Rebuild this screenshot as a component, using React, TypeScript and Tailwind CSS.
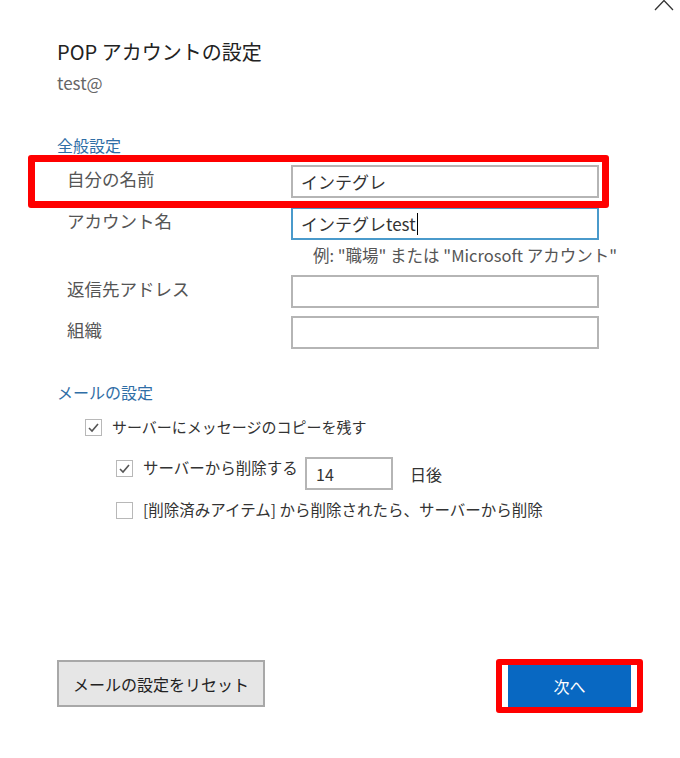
import React from "react";

const font = { fontFamily: "'Noto Sans CJK JP', 'Noto Sans', sans-serif" };

function Check({ checked }: { checked: boolean }) {
  return (
    <div className="w-[17px] h-[17px] border border-[#b8b8b8] bg-white flex items-center justify-center shrink-0">
      {checked && (
        <svg width="13" height="13" viewBox="0 0 13 13">
          <path d="M2 7 L5 10 L11 3" fill="none" stroke="#555" strokeWidth="1.6" />
        </svg>
      )}
    </div>
  );
}

function Field({ label, value, focused, cursor }: { label: string; value?: string; focused?: boolean; cursor?: boolean }) {
  return (
    <div className="flex items-start">
      <div className="w-[234px] pl-[10px] pt-[2px] text-[17.5px] leading-[24px] text-[#555]">{label}</div>
      <div
        className={`w-[308px] h-[33px] border-2 ${focused ? "border-[#4a9acb]" : "border-[#b5b5b5]"} bg-white flex items-center px-[8px] text-[17px] text-[#333]`}
      >
        {value}
        {cursor && <span className="inline-block w-px h-[22px] bg-black ml-px" />}
      </div>
    </div>
  );
}

export default function App() {
  return (
    <div className="relative w-[680px] h-[758px] bg-white overflow-hidden" style={font}>
      {/* close button, cut off at the top */}
      <svg className="absolute left-[652px] top-0" width="24" height="12" viewBox="0 0 24 12">
        <path d="M3 10 L12 0.5 L21 10" fill="none" stroke="#333" strokeWidth="1.3" />
      </svg>

      <div className="pl-[57px] pt-[38px] flex flex-col">
        <h1 className="text-[20px] leading-[28px] text-[#222]">POP アカウントの設定</h1>
        <div className="mt-[5px] text-[17px] leading-[24px] text-[#666]">test@</div>

        <div className="mt-[39px] text-[16px] leading-[22px] text-[#2f6ea6]">全般設定</div>

        <div className="mt-[9px] relative">
          <Field label="自分の名前" value="インテグレ" />
          <div className="absolute -left-[29px] -top-[10px] w-[581px] h-[53px] border-[7px] border-[#f00] rounded-[3px] pointer-events-none" />
        </div>
        <div className="mt-[9px]">
          <Field label="アカウント名" value="インテグレtest" focused cursor />
        </div>
        <div className="mt-[5px] pl-[256px] text-[16.5px] leading-[20px] text-[#555]">
          例: "職場" または "Microsoft アカウント"
        </div>
        <div className="mt-[10px]">
          <Field label="返信先アドレス" />
        </div>
        <div className="mt-[8px]">
          <Field label="組織" />
        </div>

        <div className="mt-[32px] text-[16px] leading-[22px] text-[#2f6ea6]">メールの設定</div>

        <div className="mt-[12px] pl-[28px] flex items-center gap-[10px] h-[24px]">
          <Check checked />
          <span className="text-[15px] text-[#333]">サーバーにメッセージのコピーを残す</span>
        </div>

        <div className="mt-[17px] pl-[59px] flex items-start">
          <div className="w-[189px] flex items-center gap-[10px] h-[24px]">
            <Check checked />
            <span className="text-[15.5px] text-[#333]">サーバーから削除する</span>
          </div>
          <div className="mt-[1px] w-[88px] h-[33px] border-2 border-[#b5b5b5] flex items-center px-[9px] text-[16px] text-[#333]">
            14
          </div>
          <span className="ml-[17px] mt-[6px] text-[16px] leading-[24px] text-[#333]">日後</span>
        </div>

        <div className="mt-[8px] pl-[59px] flex items-center gap-[10px] h-[24px]">
          <Check checked={false} />
          <span className="text-[15.5px] text-[#333]">[削除済みアイテム] から削除されたら、サーバーから削除</span>
        </div>

        <div className="mt-[137px] pr-[37px] flex justify-between items-start">
          <button className="mt-[1px] w-[208px] h-[47px] bg-[#e6e6e6] border-2 border-[#a8a8a8] text-[16px] text-[#222]">
            メールの設定をリセット
          </button>
          <div className="w-[147px] h-[54px] border-[6px] border-[#f00] rounded-[3px] bg-white px-[6px]">
            <button className="w-full h-full bg-[#0868c2] text-white text-[16px]">次へ</button>
          </div>
        </div>
      </div>
    </div>
  );
}
